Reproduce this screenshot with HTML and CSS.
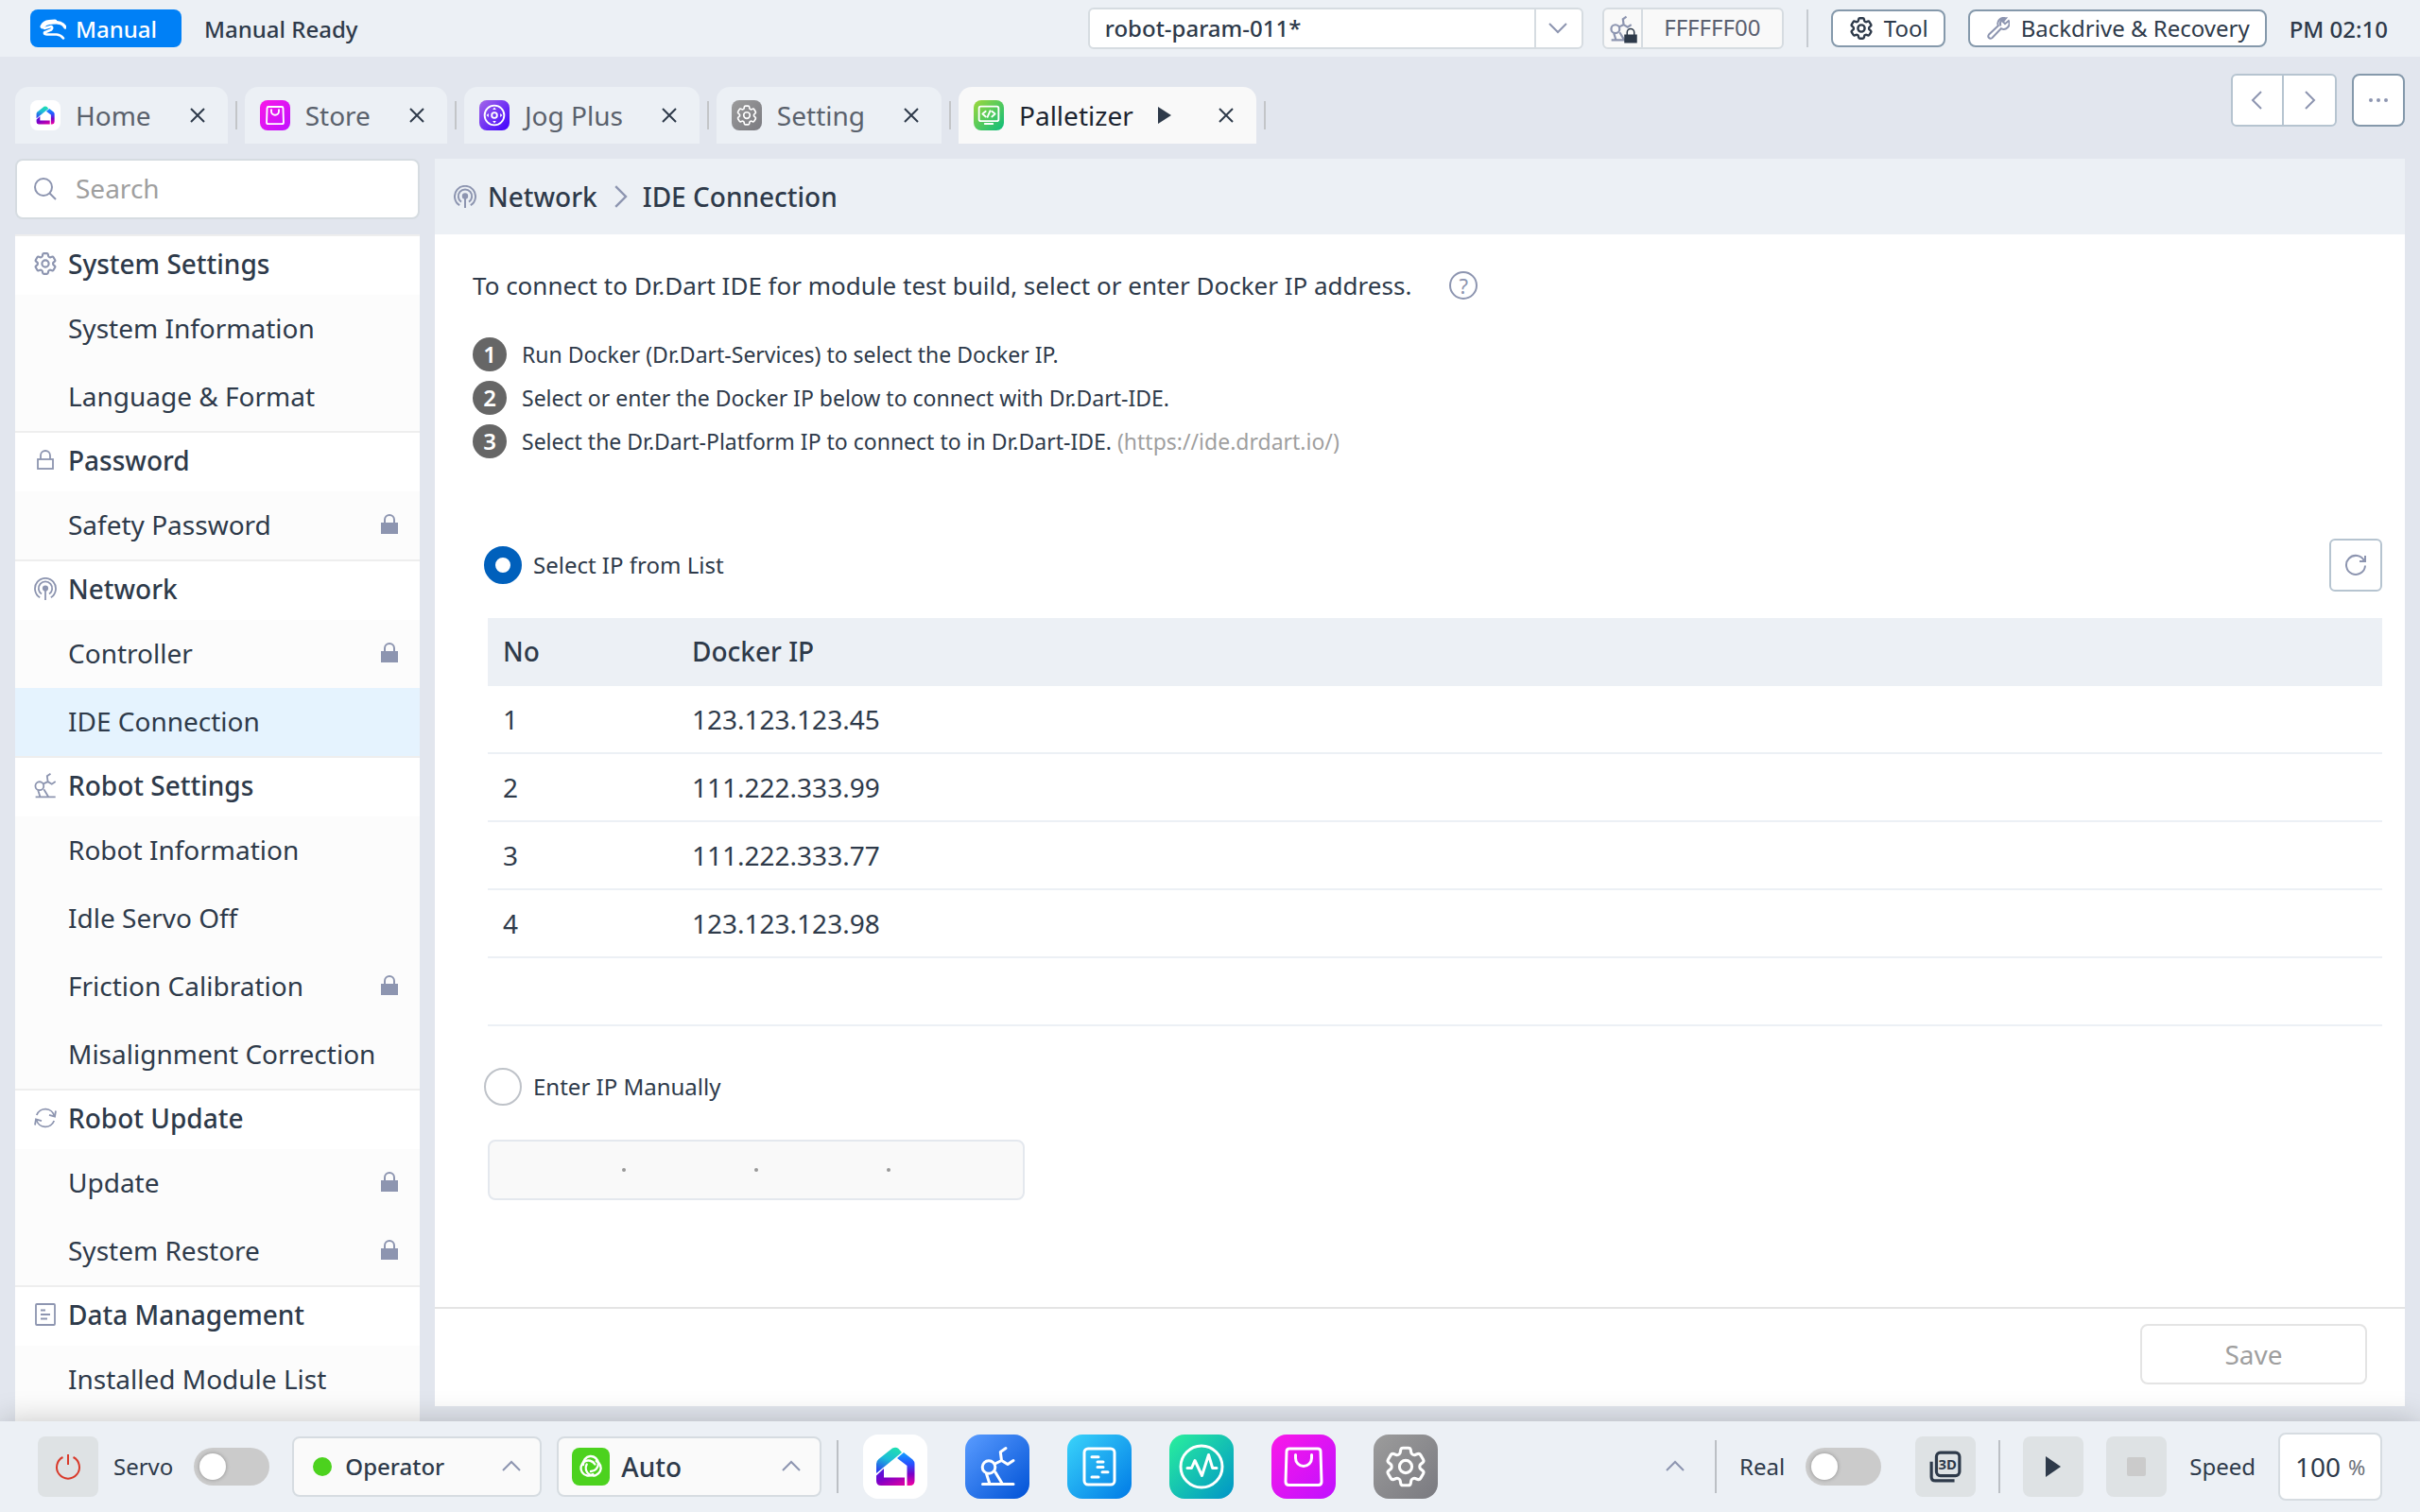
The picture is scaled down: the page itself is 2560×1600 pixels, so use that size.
FILE: index.html
```html
<!DOCTYPE html>
<html lang="en">
<head>
<meta charset="utf-8">
<title>Settings - IDE Connection</title>
<meta name="viewport" content="width=device-width, initial-scale=1">
<link rel="stylesheet" href="styles.css">
</head>
<body>
<svg class="sprite" aria-hidden="true">
  <defs>
    <linearGradient id="g-home1" x1="0.6" y1="0" x2="0.2" y2="1"><stop offset="0" stop-color="#1fdcb4"/><stop offset=".45" stop-color="#1cbcd8"/><stop offset="1" stop-color="#2a3cf0"/></linearGradient>
    <linearGradient id="g-home2" x1="0" y1="0" x2="0" y2="1"><stop offset="0" stop-color="#12a0ff"/><stop offset=".35" stop-color="#2750ff"/><stop offset=".65" stop-color="#7a00c8"/><stop offset="1" stop-color="#f500a0"/></linearGradient>
    <linearGradient id="g-home3" x1="0" y1="0" x2=".8" y2="1"><stop offset="0" stop-color="#3a22e8"/><stop offset=".5" stop-color="#7c00c8"/><stop offset="1" stop-color="#d000a8"/></linearGradient>
    <symbol id="gear" viewBox="2 2 20 20">
      <path d="M9.594 3.94c.09-.542.56-.94 1.11-.94h2.593c.55 0 1.02.398 1.11.94l.213 1.281c.063.374.313.686.645.87.074.04.147.083.22.127.325.196.72.257 1.075.124l1.217-.456a1.125 1.125 0 0 1 1.37.49l1.296 2.247a1.125 1.125 0 0 1-.26 1.431l-1.003.827c-.293.241-.438.613-.43.992a7.723 7.723 0 0 1 0 .255c-.008.378.137.75.43.991l1.004.827c.424.35.534.955.26 1.43l-1.298 2.247a1.125 1.125 0 0 1-1.369.491l-1.217-.456c-.355-.133-.75-.072-1.076.124a6.47 6.47 0 0 1-.22.128c-.331.183-.581.495-.644.869l-.213 1.281c-.09.543-.56.94-1.11.94h-2.594c-.55 0-1.019-.398-1.11-.94l-.213-1.281c-.062-.374-.312-.686-.644-.87a6.52 6.52 0 0 1-.22-.127c-.325-.196-.72-.257-1.076-.124l-1.217.456a1.125 1.125 0 0 1-1.369-.49l-1.297-2.247a1.125 1.125 0 0 1 .26-1.431l1.004-.827c.292-.24.437-.613.43-.991a6.932 6.932 0 0 1 0-.255c.007-.38-.138-.751-.43-.992l-1.004-.827a1.125 1.125 0 0 1-.26-1.43l1.297-2.247a1.125 1.125 0 0 1 1.37-.491l1.216.456c.356.133.751.072 1.076-.124.072-.044.146-.086.22-.128.332-.183.582-.495.644-.869l.214-1.28Z"/>
      <circle cx="12" cy="12" r="3"/>
    </symbol>
    <symbol id="antenna" viewBox="0 0 24 24">
      <path d="M6.2 21.2A11 11 0 1 1 17.8 21.2"/><path d="M8 17.6A7.2 7.2 0 1 1 16 17.6"/><path d="M12 12v12"/><circle cx="12" cy="11.5" r="2.2" fill="currentColor"/>
    </symbol>
    <symbol id="lock-line" viewBox="0 0 24 24"><rect x="4" y="11" width="16" height="10"/><path d="M7 11V7a5 5 0 0 1 10 0v4"/></symbol>
    <symbol id="lock" viewBox="0 0 24 24"><rect x="4" y="11" width="16" height="10" fill="currentColor"/><path d="M7 11V7a5 5 0 0 1 10 0v4"/></symbol>
    <symbol id="robot" viewBox="16 12 37 43">
      <circle cx="25" cy="34.5" r="6.8"/><path d="M18.500 52.500H51M22.500 41.500L26 52.500M32 40L39.500 52.500M31.500 31L38.500 27.500L37.300 18.500L43 14.500M38.500 27.500L45 31.500L51 27.500"/>
    </symbol>
    <symbol id="sync" viewBox="0 0 24 24"><path d="M2.800 9A9.800 9.800 0 0 1 21.500 10M21.200 15A9.800 9.800 0 0 1 2.500 14"/><path d="M23 4.500L22 10.500L16 8.800M1 19.500L2 13.500L8 15.200"/></symbol>
    <symbol id="note" viewBox="0 0 24 24"><rect x="2" y="1" width="20" height="22" rx="1"/><path d="M7 7.500h5M7 12h10M7 16.500h7"/></symbol>
    <symbol id="cross" viewBox="0 0 16 16"><path d="M1 1L15 15M15 1L1 15"/></symbol>
    <symbol id="down" viewBox="0 0 20 20"><path d="M1 5L10 14L19 5"/></symbol>
    <symbol id="up" viewBox="0 0 20 20"><path d="M1 14L10 5L19 14"/></symbol>
    <symbol id="left" viewBox="0 0 20 20"><path d="M14 1L5 10L14 19"/></symbol>
    <symbol id="right" viewBox="0 0 20 20"><path d="M6 1L15 10L6 19"/></symbol>
    <symbol id="app-home" viewBox="0 0 68 68">
      <path d="M14 41V31Q14 28 16.500 26L31 14.600Q34.500 12.500 37.500 15L41 19Z" fill="url(#g-home1)" stroke="none"/>
      <path d="M43 19L52.500 26.500Q54.500 28.500 54.500 31V49Q54.500 54 49.500 54H46.500V33L36 25Z" fill="url(#g-home2)" stroke="none"/>
      <path d="M14 43.500L22 36V45.500H44V54H19Q14 54 14 49Z" fill="url(#g-home3)" stroke="none"/>
    </symbol>
    <symbol id="app-robot" viewBox="0 0 68 68">
      <circle cx="25" cy="34.500" r="6.800"/><path d="M18.500 52.500H51M22.500 41.500L26 52.500M32 40L39.500 52.500M31.500 31L38.500 27.500L37.300 18.500L43 14.500M38.500 27.500L45 31.500L51 27.500"/>
    </symbol>
    <symbol id="app-task" viewBox="0 0 68 68"><rect x="18" y="15" width="32" height="38" rx="4"/><path d="M26 23.700h7M32 29h6M32 34.500h6M37 39.700h6M26 45h7"/></symbol>
    <symbol id="app-pulse" viewBox="0 0 68 68"><circle cx="34" cy="34" r="22"/><path d="M19 35.500H23.500L27 27.500L34.500 43.500L41.500 21.500L45.700 35.500H50"/></symbol>
    <symbol id="app-store" viewBox="0 0 68 68"><path d="M19 15H49Q52 15 52 18L53 50Q53 53.500 49.500 53.500H18.500Q15 53.500 15 50L16 18Q16 15 19 15Z"/><path d="M25.500 21.500V25a8.500 8.500 0 0 0 17 0V21.500"/></symbol>
    <symbol id="app-jog" viewBox="0 0 68 68"><circle cx="34" cy="34" r="22"/><circle cx="34" cy="34" r="6"/><path d="M34 16L38 21H30ZM34 52L38 47H30ZM16 34L21 30V38ZM52 34L47 30V38Z" fill="currentColor" stroke="none"/></symbol>
    <symbol id="app-code" viewBox="0 0 68 68"><rect x="12" y="14" width="44" height="33" rx="4"/><path d="M27 25L20 31L27 37M41 25L48 31L41 37M37 24L31 38M25 53H43"/></symbol>
  </defs>
</svg>

<div class="app">
  <header class="topbar">
    <button class="mode" type="button">
      <svg class="mode-icon" viewBox="0 0 28 22"><path d="M3 8Q5 4 10 3.500L16 3" stroke-width="5"/><path d="M14 3L22 4.500Q25.500 6 27 9" stroke-width="3.400"/><path d="M5 10L12 8Q14.500 9 12 11.500L5 14.500Q4.500 16.500 8 16.500H18Q22.500 17 25 20.500"/></svg>
      Manual
    </button>
    <span class="status">Manual Ready</span>
    <div class="param">
      <select class="param-select" aria-label="Parameter file"><option>robot-param-011*</option></select>
      <svg class="param-arrow icon20"><use href="#down"/></svg>
    </div>
    <div class="ident">
      <span class="ident-icon">
        <svg class="ident-robot"><use href="#robot"/></svg>
        <svg class="ident-lock"><use href="#lock"/></svg>
      </span>
      <span class="ident-code">FFFFFF00</span>
    </div>
    <span class="rule rule-top"></span>
    <button class="chip" type="button"><svg class="icon24"><use href="#gear"/></svg>Tool</button>
    <button class="chip" type="button"><svg class="icon24 muted" viewBox="0 0 24 24"><path d="M14.500 9.500A6 6 0 0 1 20 1.200L16.800 5L19 7.200L22.800 4A6 6 0 0 1 14.800 12.200L5.500 22Q3.500 23.500 2 22Q.5 20.500 2 18.500L11.800 9.200A6 6 0 0 1 19 1.200"/></svg>Backdrive &amp; Recovery</button>
    <time class="clock">PM 02:10</time>
  </header>

  <div class="tabstrip">
    <nav class="tabs" aria-label="Open modules">
      <div class="tab"><a class="tab-link" href="#home"><svg class="app-icon bg-home"><use href="#app-home"/></svg>Home</a><button class="tab-btn" type="button" aria-label="Close Home"><svg><use href="#cross"/></svg></button></div>
      <div class="tab"><a class="tab-link" href="#store"><svg class="app-icon bg-store"><use href="#app-store"/></svg>Store</a><button class="tab-btn" type="button" aria-label="Close Store"><svg><use href="#cross"/></svg></button></div>
      <div class="tab"><a class="tab-link" href="#jog"><svg class="app-icon bg-jog"><use href="#app-jog"/></svg>Jog Plus</a><button class="tab-btn" type="button" aria-label="Close Jog Plus"><svg><use href="#cross"/></svg></button></div>
      <div class="tab"><a class="tab-link" href="#setting"><svg class="app-icon bg-gear gear-pad"><use href="#gear"/></svg>Setting</a><button class="tab-btn" type="button" aria-label="Close Setting"><svg><use href="#cross"/></svg></button></div>
      <div class="tab tab-active"><a class="tab-link" href="#palletizer"><svg class="app-icon bg-code"><use href="#app-code"/></svg>Palletizer</a><button class="tab-btn tab-play" type="button" aria-label="Run Palletizer"><svg viewBox="0 0 16 20"><path d="M1 1L15 10L1 19Z" fill="currentColor" stroke="none"/></svg></button><button class="tab-btn" type="button" aria-label="Close Palletizer"><svg><use href="#cross"/></svg></button></div>
    </nav>
    <div class="pager">
      <button type="button" aria-label="Previous"><svg class="icon20"><use href="#left"/></svg></button>
      <button type="button" aria-label="Next"><svg class="icon20"><use href="#right"/></svg></button>
    </div>
    <button class="more" type="button" aria-label="More"><i></i><i></i><i></i></button>
  </div>

  <div class="body">
    <aside class="sidebar">
      <label class="search"><svg class="icon24" viewBox="0 0 24 24"><circle cx="10" cy="10" r="9"/><path d="M16.500 16.500L23 23"/></svg><input type="search" placeholder="Search" aria-label="Search"></label>
      <nav class="tree">
        <section><h2><svg class="icon24"><use href="#gear"/></svg>System Settings</h2>
          <a href="#sysinfo">System Information</a>
          <a href="#lang">Language &amp; Format</a></section>
        <section><h2><svg class="icon24"><use href="#lock-line"/></svg>Password</h2>
          <a href="#safety">Safety Password<svg class="icon24"><use href="#lock"/></svg></a></section>
        <section><h2><svg class="icon24"><use href="#antenna"/></svg>Network</h2>
          <a href="#controller">Controller<svg class="icon24"><use href="#lock"/></svg></a>
          <a class="current" href="#ide" aria-current="page">IDE Connection</a></section>
        <section><h2><svg class="icon-robot"><use href="#robot"/></svg>Robot Settings</h2>
          <a href="#robotinfo">Robot Information</a>
          <a href="#idle">Idle Servo Off</a>
          <a href="#friction">Friction Calibration<svg class="icon24"><use href="#lock"/></svg></a>
          <a href="#misalign">Misalignment Correction</a></section>
        <section><h2><svg class="icon24"><use href="#sync"/></svg>Robot Update</h2>
          <a href="#update">Update<svg class="icon24"><use href="#lock"/></svg></a>
          <a href="#restore">System Restore<svg class="icon24"><use href="#lock"/></svg></a></section>
        <section><h2><svg class="icon24"><use href="#note"/></svg>Data Management</h2>
          <a href="#modules">Installed Module List</a></section>
      </nav>
    </aside>

    <main class="panel">
      <h1 class="crumbs"><svg class="icon24"><use href="#antenna"/></svg><span>Network</span><svg class="icon24"><use href="#right"/></svg><span>IDE Connection</span></h1>
      <div class="content">
        <p class="intro">To connect to Dr.Dart IDE for module test build, select or enter Docker IP address.
          <button class="help" type="button" aria-label="Help">?</button></p>
        <ol class="steps">
          <li><b>1</b><span>Run Docker (Dr.Dart-Services) to select the Docker IP.</span></li>
          <li><b>2</b><span>Select or enter the Docker IP below to connect with Dr.Dart-IDE.</span></li>
          <li><b>3</b><span>Select the Dr.Dart-Platform IP to connect to in Dr.Dart-IDE. <a href="https://ide.drdart.io/">(https://ide.drdart.io/)</a></span></li>
        </ol>
        <div class="choice choice-list">
          <label class="radio"><input type="radio" name="source" checked>Select IP from List</label>
          <button class="refresh" type="button" aria-label="Refresh"><svg class="icon24" viewBox="0 0 24 24"><path d="M21 7.500A10 10 0 1 0 22 12.500"/><path d="M22 2V8H16"/></svg></button>
        </div>
        <table class="ips">
          <thead><tr><th class="col-no" scope="col">No</th><th scope="col">Docker IP</th></tr></thead>
          <tbody>
            <tr><td>1</td><td>123.123.123.45</td></tr>
            <tr><td>2</td><td>111.222.333.99</td></tr>
            <tr><td>3</td><td>111.222.333.77</td></tr>
            <tr><td>4</td><td>123.123.123.98</td></tr>
            <tr><td></td><td></td></tr>
          </tbody>
        </table>
        <div class="choice choice-manual">
          <label class="radio"><input type="radio" name="source">Enter IP Manually</label>
        </div>
        <div class="octets">
          <input type="text" aria-label="First octet" disabled><i></i><input type="text" aria-label="Second octet" disabled><i></i><input type="text" aria-label="Third octet" disabled><i></i><input type="text" aria-label="Fourth octet" disabled>
        </div>
      </div>
      <footer class="panel-foot"><button class="save" type="button" disabled>Save</button></footer>
    </main>
  </div>

  <footer class="dock">
    <button class="tile power" type="button" aria-label="Servo power"><svg class="icon28" viewBox="0 0 28 28"><path d="M8.500 4A12 12 0 1 0 19.500 4M14 1V12"/></svg></button>
    <label class="switch switch-servo">Servo<input type="checkbox"></label>
    <div class="drop drop-role">
      <i class="dot"></i>
      <select aria-label="Role"><option>Operator</option></select>
      <svg class="icon20"><use href="#up"/></svg>
    </div>
    <div class="drop drop-mode">
      <svg class="auto-icon" viewBox="0 0 40 40"><path d="M12 18A8 8 0 1 1 20 25"/><path d="M12 18A8 8 0 1 1 20 25" transform="rotate(120 20 20)"/><path d="M12 18A8 8 0 1 1 20 25" transform="rotate(240 20 20)"/></svg>
      <select aria-label="Mode"><option>Auto</option></select>
      <svg class="icon20"><use href="#up"/></svg>
    </div>
    <span class="rule rule-dock rule-apps"></span>
    <nav class="apps" aria-label="Modules">
      <a href="#home" aria-label="Home"><svg class="app-icon bg-home"><use href="#app-home"/></svg></a>
      <a href="#robot-params" aria-label="Robot parameters"><svg class="app-icon bg-robot"><use href="#app-robot"/></svg></a>
      <a href="#task" aria-label="Task editor"><svg class="app-icon bg-task"><use href="#app-task"/></svg></a>
      <a href="#monitor" aria-label="Monitoring"><svg class="app-icon bg-pulse"><use href="#app-pulse"/></svg></a>
      <a href="#store" aria-label="Store"><svg class="app-icon bg-store"><use href="#app-store"/></svg></a>
      <a href="#setting" aria-label="Setting"><svg class="app-icon bg-gear gear-pad"><use href="#gear"/></svg></a>
    </nav>
    <button class="expand" type="button" aria-label="Expand"><svg class="icon20"><use href="#up"/></svg></button>
    <span class="rule rule-dock"></span>
    <label class="switch switch-real">Real<input type="checkbox"></label>
    <button class="tile" type="button" aria-label="3D view"><svg class="icon-3d" viewBox="0 0 32 32"><rect x="7" y="2" width="23" height="23" rx="4"/><path d="M2 11V26Q2 30 6 30H25"/><text x="18" y="19">3D</text></svg></button>
    <span class="rule rule-dock"></span>
    <button class="tile" type="button" aria-label="Play"><svg class="play" viewBox="0 0 18 24"><path d="M1 1L17 12L1 23Z"/></svg></button>
    <button class="tile" type="button" aria-label="Stop" disabled><i class="stop"></i></button>
    <label class="speed-label" for="speed">Speed</label>
    <div class="speed"><input id="speed" type="text" value="100"><span>%</span></div>
  </footer>
</div>
</body>
</html>
```
FILE: styles.css
```css
:root {
  --ink: #2e3a4a;
  --muted: #8d95b0;
  --page: #e2e6ee;
  --bar: #ecf0f5;
  --line: #d6dce1;
  --gray: #9f9f9f;
}

* { box-sizing: border-box; }

body {
  margin: 0;
  background: var(--page);
  color: var(--ink);
  font: 400 28px/40px "Noto Sans", sans-serif;
}

button, input, select { font: inherit; color: inherit; margin: 0; padding: 0; }
button { cursor: pointer; }
a { color: inherit; text-decoration: none; }
h1, h2, p, ol { margin: 0; padding: 0; font: inherit; }
svg { fill: none; stroke: currentColor; stroke-width: 2; flex: none; display: block; }
select { appearance: none; border: 0; background: transparent; outline: 0; }

.sprite { position: absolute; width: 0; height: 0; }
.icon20 { width: 20px; height: 20px; color: var(--muted); }
.icon24 { width: 24px; height: 24px; }
.icon28 { width: 28px; height: 28px; }
.muted { color: var(--muted); }
.rule { width: 2px; flex: none; background: #c6cbd1; }

.app { height: 100vh; display: flex; flex-direction: column; overflow: hidden; }

/* Top bar */
.topbar {
  flex: none;
  min-height: 60px;
  display: flex;
  align-items: center;
  gap: 24px;
  padding: 0 34px 0 32px;
  background: var(--bar);
  font-size: 24px;
  line-height: 36px;
  font-weight: 500;
}
.mode {
  display: flex; align-items: center; gap: 10px;
  width: 160px; height: 40px; padding: 2px 0 0 10px;
  border: 0; border-radius: 8px; background: #0080f6; color: #fff;
}
.mode-icon { width: 28px; height: 22px; stroke-width: 2.6; stroke-linecap: round; stroke-linejoin: round; }
.status, .clock { padding-top: 2px; }
.param {
  margin-left: auto; margin-right: -4px;
  display: grid; grid-template-columns: 1fr 50px; align-items: center;
  width: 524px; height: 44px;
  border: 2px solid var(--line); border-radius: 6px; background: #fff;
}
.param-select { grid-area: 1 / 1 / 2 / 3; height: 40px; padding-left: 16px; }
.param-arrow { grid-area: 1 / 2; justify-self: center; pointer-events: none; }
.param::after { content: ""; grid-area: 1 / 2; width: 2px; height: 40px; background: var(--line); }
.ident {
  display: flex; align-items: stretch; min-width: 192px; height: 44px;
  border: 2px solid var(--line); border-radius: 6px; background: #f9f9f9;
  color: #5a6070; font-weight: 400; line-height: 38px;
}
.ident-icon { position: relative; width: 41px; border-right: 2px solid var(--line); padding: 6px; }
.ident-robot { width: 24px; height: 28px; color: var(--muted); stroke-width: 3.400; }
.ident-lock { position: absolute; right: 2px; bottom: 3px; width: 18px; height: 18px; color: var(--ink); }
.ident-code { flex: 1; text-align: center; padding: 0 16px; }
.rule-top { height: 40px; }
.chip {
  display: flex; align-items: center; gap: 12px;
  height: 40px; padding: 0 16px 0 18px;
  border: 2px solid #8599ab; border-radius: 8px; background: #fff;
  font-weight: 400;
}

/* Tabs */
.tabstrip { flex: none; display: flex; align-items: flex-start; padding: 18px 16px 16px; }
.tabs { display: flex; margin-top: 14px; margin-right: auto; }
.tab {
  display: flex; align-items: center; gap: 33px;
  height: 60px; padding: 0 16px; margin-right: 18px; position: relative;
  border-radius: 14px 14px 0 0; background: var(--bar); color: #5a616c;
}
.tab::after { content: ""; position: absolute; left: calc(100% + 8px); top: 15px; width: 2px; height: 30px; background: #c3c5c8; }
.tab-active { background: #f9f9f9; color: #1c2430; }
.tab-link { display: flex; align-items: center; gap: 16px; line-height: 38px; }
.tab .app-icon { width: 32px; height: 32px; border-radius: 8px; stroke-width: 4; }
.tab .gear-pad { padding: 5px; stroke-width: 1.500; }
.tab-btn { display: grid; place-items: center; width: 32px; height: 32px; border: 0; background: none; color: var(--ink); }
.tab-btn svg { width: 16px; height: 16px; }
.tab-play { margin-left: -16px; }
.tab-play svg { height: 20px; }
.pager { display: flex; height: 56px; border: 2px solid #b6c4d0; border-radius: 6px; background: #fff; }
.pager button { display: grid; place-items: center; width: 52px; border: 0; background: none; }
.pager button + button { width: 56px; border-left: 2px solid #b6c4d0; }
.more {
  display: flex; align-items: center; justify-content: center; gap: 4px;
  width: 56px; height: 56px; margin-left: 16px;
  border: 2px solid #8599ab; border-radius: 8px; background: #fff;
}
.more i { width: 4px; height: 4px; border-radius: 50%; background: var(--muted); }

/* App icons */
.app-icon { width: 68px; height: 68px; border-radius: 16px; color: #fff; stroke-width: 3; stroke-linecap: round; stroke-linejoin: round; }
.bg-home { background: #fff; }
.bg-robot { background: linear-gradient(135deg, #5a9cff, #0052d6); }
.bg-task { background: linear-gradient(135deg, #3ad4fa, #007ae6); }
.bg-pulse { background: linear-gradient(135deg, #2af09c, #0094c8); }
.bg-store { background: linear-gradient(135deg, #fa18e8, #c010ff); }
.bg-gear { background: linear-gradient(135deg, #9c9c9c, #7a7a80); }
.bg-jog { background: linear-gradient(135deg, #a468e8, #4000ff); }
.bg-code { background: linear-gradient(135deg, #9ed83c, #0cbc7c); }
.gear-pad { padding: 12px; stroke-width: 1.400; }

/* Sidebar */
.body { flex: 1; min-height: 0; display: flex; gap: 16px; padding: 0 16px; }
.sidebar { flex: none; width: 428px; display: flex; flex-direction: column; gap: 16px; overflow: hidden; }
.search {
  flex: none; display: flex; align-items: center; gap: 20px;
  height: 64px; padding: 0 18px;
  border: 2px solid var(--line); border-radius: 8px; background: #fff; color: var(--muted);
}
.search input { flex: 1; min-width: 0; padding-bottom: 2px; border: 0; outline: 0; background: none; color: var(--ink); }
.search input::placeholder { color: var(--gray); opacity: 1; }
.tree { flex: 1 0 auto; background: #fcfcfc; }
.tree section { border-top: 2px solid #eee; }
.tree h2 { display: flex; align-items: center; gap: 12px; height: 62px; padding: 0 20px 4px; background: #fff; font-weight: 500; }
.tree svg { color: var(--muted); }
.tree h2 svg { stroke-width: 1.800; }
.tree h2 .icon-robot { width: 24px; height: 28px; stroke-width: 2.800; }
.tree a { display: flex; align-items: center; justify-content: space-between; height: 72px; padding: 0 20px 2px 56px; }
.tree .current { background: #e5f3fe; }

/* Main panel */
.panel { flex: 1; min-width: 0; display: flex; flex-direction: column; margin-bottom: 16px; background: #fff; }
.crumbs { flex: none; display: flex; align-items: center; gap: 12px; height: 80px; padding: 0 20px; background: var(--bar); font-weight: 500; }
.crumbs svg { color: var(--muted); }
.content { flex: 1; min-height: 0; padding: 34px 24px 0 40px; }
.intro { display: flex; align-items: center; gap: 40px; font-size: 26px; }
.help {
  width: 30px; height: 30px; border: 2px solid var(--muted); border-radius: 50%;
  background: none; color: var(--muted); font-size: 22px; line-height: 26px;
}
.steps { display: grid; gap: 10px; margin-top: 35px; list-style: none; font-size: 23px; line-height: 36px; }
.steps li { display: flex; gap: 16px; }
.steps b { width: 36px; height: 36px; border-radius: 50%; background: #666; color: #fff; font-size: 24px; font-weight: 600; text-align: center; }
.steps a { color: var(--gray); }
.choice { display: flex; align-items: center; justify-content: space-between; margin-left: 12px; font-size: 24px; line-height: 36px; }
.choice-list { margin-top: 85px; }
.choice-manual { margin-top: 44px; }
.radio { display: flex; align-items: center; gap: 12px; }
.radio input { appearance: none; width: 40px; height: 40px; border: 2px solid #bfc3c9; border-radius: 50%; background: #fff; }
.radio input:checked { border: 12px solid #0060bc; }
.refresh { display: grid; place-items: center; width: 56px; height: 56px; border: 2px solid #b6c4d0; border-radius: 6px; background: #fff; color: var(--muted); }
.ips { width: calc(100% - 16px); margin: 28px 0 0 16px; border-collapse: separate; border-spacing: 0; table-layout: fixed; }
.ips th, .ips td { height: 72px; padding: 0 16px; text-align: left; font-weight: 400; border-bottom: 2px solid var(--bar); }
.ips th { background: var(--bar); font-weight: 500; }
.col-no { width: 200px; }
.octets {
  display: flex; align-items: center;
  width: 568px; height: 64px; margin: 36px 0 0 16px; padding: 0 4px;
  border: 2px solid #e4e8ee; border-radius: 8px; background: #f9f9f9;
}
.octets input { flex: 1; min-width: 0; border: 0; background: none; text-align: center; }
.octets i { flex: none; width: 4px; height: 4px; border-radius: 50%; background: #999; }
.panel-foot { flex: none; display: flex; justify-content: flex-end; height: 105px; padding: 16px 40px; border-top: 2px solid #e4e4e4; }
.save { width: 240px; height: 64px; border: 2px solid #e4e4e4; border-radius: 8px; background: #fff; color: var(--gray); }

/* Bottom dock */
.dock {
  flex: none; z-index: 1;
  display: flex; align-items: center; gap: 24px;
  min-height: 96px; padding: 0 40px;
  background: var(--bar); box-shadow: 0 0 32px rgba(0, 0, 0, .22);
  font-size: 24px; line-height: 36px;
}
.tile { display: grid; place-items: center; flex: none; width: 64px; height: 64px; border: 0; border-radius: 8px; background: #dee2e4; color: var(--ink); }
.power { color: #d93a2b; }
.switch { display: flex; align-items: center; gap: 22px; }
.switch-servo { margin-left: -8px; }
.switch-real { margin-right: 12px; }
.switch input { appearance: none; display: flex; align-items: center; width: 80px; height: 40px; padding: 0 6px; border-radius: 20px; background: #cbcbcb; }
.switch input::before { content: ""; width: 28px; height: 28px; border-radius: 50%; background: #fff; box-shadow: 0 0 4px rgba(0, 0, 0, .3); }
.drop {
  display: flex; align-items: center; gap: 12px; height: 64px; padding: 0 20px;
  border: 2px solid var(--line); border-radius: 8px; background: #fafafa; font-weight: 500;
}
.drop select { flex: 1; min-width: 0; height: 60px; }
.drop-role { width: 264px; gap: 14px; }
.drop-mode { width: 280px; margin-left: -8px; padding-left: 14px; font-size: 28px; }
.dot { width: 20px; height: 20px; border-radius: 50%; background: #4cd21e; }
.auto-icon { width: 40px; height: 40px; border-radius: 8px; background: #4cd21e; color: #fff; stroke-width: 2.400; stroke-linecap: round; }
.rule-dock { height: 56px; background: #bcc0c5; }
.rule-apps { margin: 0 2px 0 -8px; }
.apps { display: flex; gap: 40px; }
.expand { display: grid; place-items: center; width: 36px; height: 36px; margin-left: auto; border: 0; background: none; }
.icon-3d { width: 34px; height: 34px; stroke-width: 3; }
.icon-3d text { fill: currentColor; stroke: none; font: 700 14px "Noto Sans", sans-serif; text-anchor: middle; }
.play { width: 18px; height: 24px; fill: currentColor; stroke: none; }
.stop { width: 20px; height: 20px; border-radius: 2px; background: #cbcbcb; }
.speed { display: flex; align-items: center; gap: 6px; width: 110px; height: 72px; padding: 0 16px; border: 2px solid var(--line); border-radius: 8px; background: #fff; }
.speed input { width: 50px; border: 0; outline: 0; background: none; font-size: 28px; }
.speed span { font-size: 22px; color: #6b7078; }
```
